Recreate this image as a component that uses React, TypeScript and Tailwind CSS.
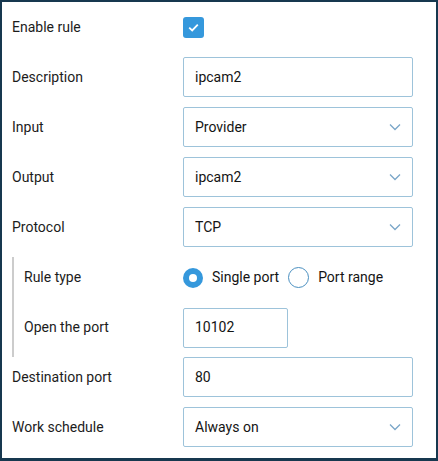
import React from 'react';

const font = { fontFamily: 'Roboto, "Liberation Sans", sans-serif' };

function Chevron() {
  return (
    <svg width="12" height="8" viewBox="0 0 12 8" className="shrink-0">
      <path d="M1 1.5 L6 6.5 L11 1.5" fill="none" stroke="#7aa6c8" strokeWidth="1.3" />
    </svg>
  );
}

function TextBox({ value, w = 'w-[230px]' }: { value: string; w?: string }) {
  return (
    <div className={`${w} h-[40px] border border-[#9dc3da] rounded-[2px] flex items-center px-[11px] text-[14px] text-[#141414]`}>
      {value}
    </div>
  );
}

function Select({ value }: { value: string }) {
  return (
    <div className="w-[230px] h-[40px] border border-[#9dc3da] rounded-[2px] flex items-center justify-between pl-[11px] pr-[11px] text-[14px] text-[#141414]">
      <span>{value}</span>
      <Chevron />
    </div>
  );
}

function Row({ label, children, h = 'h-[50px]', lw = 'w-[171px]' }: { label: string; children: React.ReactNode; h?: string; lw?: string }) {
  return (
    <div className={`flex items-center ${h}`}>
      <div className={`${lw} text-[14px] text-[#1c1c1c] shrink-0`}>{label}</div>
      {children}
    </div>
  );
}

function Radio({ checked, label }: { checked?: boolean; label: string }) {
  return (
    <div className="flex items-center gap-[9px]">
      {checked ? (
        <div className="w-[20px] h-[20px] rounded-full bg-[#3598dc] flex items-center justify-center">
          <div className="w-[8px] h-[8px] rounded-full bg-white" />
        </div>
      ) : (
        <div className="w-[21px] h-[21px] rounded-full border border-[#4a8fc0]" />
      )}
      <span className="text-[14px] text-[#141414]">{label}</span>
    </div>
  );
}

export default function App() {
  return (
    <div style={font} className="w-[438px] h-[461px] bg-white border-[#17384f] border-t-2 border-l-2 border-r-2 border-b-[3px] pl-[10px]">
      <Row label="Enable rule">
        <div className="w-[21px] h-[21px] rounded-[3px] bg-[#3598dc] flex items-center justify-center">
          <svg width="11" height="9" viewBox="0 0 11 9">
            <path d="M1.2 4.6 L4.2 7.4 L9.8 1.6" fill="none" stroke="#fff" strokeWidth="1.8" />
          </svg>
        </div>
      </Row>
      <Row label="Description">
        <TextBox value="ipcam2" />
      </Row>
      <Row label="Input">
        <Select value="Provider" />
      </Row>
      <Row label="Output">
        <Select value="ipcam2" />
      </Row>
      <Row label="Protocol">
        <Select value="TCP" />
      </Row>
      <div className="mt-[5px] mb-[-5px] border-l-2 border-[#cccccc] pl-[10px]">
        <Row label="Rule type" h="h-[41px]" lw="w-[159px]">
          <div className="flex items-center gap-[9px]">
            <Radio checked label="Single port" />
            <Radio label="Port range" />
          </div>
        </Row>
        <Row label="Open the port" h="h-[59px]" lw="w-[159px]">
          <TextBox value="10102" w="w-[105px]" />
        </Row>
      </div>
      <Row label="Destination port">
        <TextBox value="80" />
      </Row>
      <Row label="Work schedule">
        <Select value="Always on" />
      </Row>
    </div>
  );
}
